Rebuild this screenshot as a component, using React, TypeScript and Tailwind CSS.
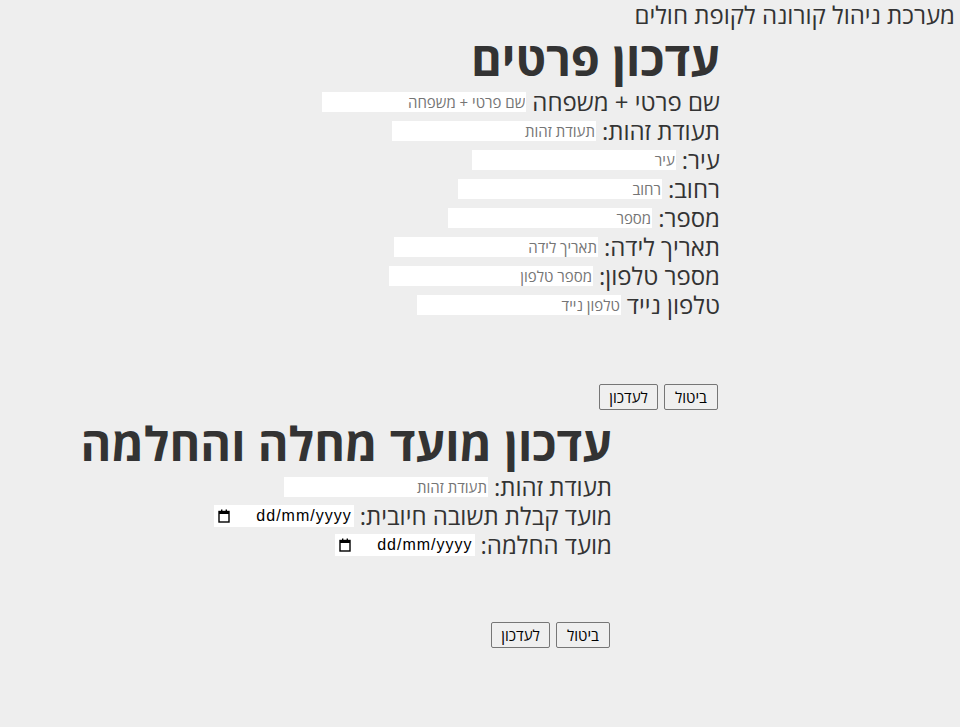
import type { ReactNode } from 'react'

type Field = {
  label: string
  placeholder?: string
  type?: 'text' | 'date'
}

const DETAILS_FIELDS: Field[] = [
  { label: 'שם פרטי + משפחה', placeholder: 'שם פרטי + משפחה' },
  { label: 'תעודת זהות:', placeholder: 'תעודת זהות' },
  { label: 'עיר:', placeholder: 'עיר' },
  { label: 'רחוב:', placeholder: 'רחוב' },
  { label: 'מספר:', placeholder: 'מספר' },
  { label: 'תאריך לידה:', placeholder: 'תאריך לידה' },
  { label: 'מספר טלפון:', placeholder: 'מספר טלפון' },
  { label: 'טלפון נייד', placeholder: 'טלפון נייד' },
]

const ILLNESS_FIELDS: Field[] = [
  { label: 'תעודת זהות:', placeholder: 'תעודת זהות' },
  { label: 'מועד קבלת תשובה חיובית:', type: 'date' },
  { label: 'מועד החלמה:', type: 'date' },
]

function CalendarIcon() {
  return (
    <svg className="h-[14px] w-[12px]" viewBox="0 0 12 14" fill="none">
      <rect x="1" y="2.5" width="10" height="10.5" stroke="#000" strokeWidth="1.4" />
      <rect x="1" y="2.5" width="10" height="2.5" fill="#000" />
      <rect x="3" y="0.5" width="1.4" height="2.5" fill="#000" />
      <rect x="7.6" y="0.5" width="1.4" height="2.5" fill="#000" />
    </svg>
  )
}

function DateField() {
  return (
    <span
      className="flex h-[22px] w-[140px] items-center justify-between bg-white pr-[2px] pl-[4px] text-black"
      dir="ltr"
    >
      <CalendarIcon />
      <span className="font-['Liberation_Sans',sans-serif] text-[16px] leading-[22px] tracking-[1px]">
        dd/mm/yyyy
      </span>
    </span>
  )
}

function FieldRow({ field }: { field: Field }) {
  return (
    <label className="flex h-[29px] items-center gap-[6px] text-[24px] leading-[29px]">
      <span>{field.label}</span>
      {field.type === 'date' ? (
        <DateField />
      ) : (
        <input
          className="h-[20px] w-[204px] bg-white px-[1px] text-[15px] leading-[20px] text-black outline-none placeholder:text-[#757575]"
          placeholder={field.placeholder}
          type="text"
        />
      )}
    </label>
  )
}

function FormButtons() {
  return (
    <div className="flex gap-[6px] pr-[2px] text-[15px] leading-[20px]">
      <button
        className="h-[26px] w-[54px] rounded-[2px] border border-[#767676] bg-[#efefef] text-black"
        type="button"
      >
        ביטול
      </button>
      <button
        className="h-[26px] w-[59px] rounded-[2px] border border-[#767676] bg-[#efefef] text-black"
        type="button"
      >
        לעדכון
      </button>
    </div>
  )
}

function FormSection({
  className,
  title,
  children,
}: {
  className: string
  title: string
  children: ReactNode
}) {
  return (
    <form className={className} onSubmit={(event) => event.preventDefault()}>
      <h1 className="h-[58px] text-[47px] leading-[58px] font-bold">{title}</h1>
      {children}
    </form>
  )
}

export default function App() {
  return (
    <div
      className="min-h-screen bg-[#eeeeee] font-['Open_Sans','DejaVu_Sans',sans-serif] text-[#333]"
      dir="rtl"
    >
      <div className="h-[29px] pr-[5px] text-[24px] leading-[29px]">
        מערכת ניהול קורונה לקופת חולים
      </div>

      <FormSection className="mr-[240px] w-fit" title="עדכון פרטים">
        {DETAILS_FIELDS.map((field) => (
          <FieldRow field={field} key={field.label} />
        ))}
        <div className="h-[65px]" />
        <FormButtons />
      </FormSection>

      <FormSection className="mt-[4px] mr-[348px] w-fit" title="עדכון מועד מחלה והחלמה">
        {ILLNESS_FIELDS.map((field) => (
          <FieldRow field={field} key={field.label} />
        ))}
        <div className="h-[63px]" />
        <FormButtons />
      </FormSection>
    </div>
  )
}
